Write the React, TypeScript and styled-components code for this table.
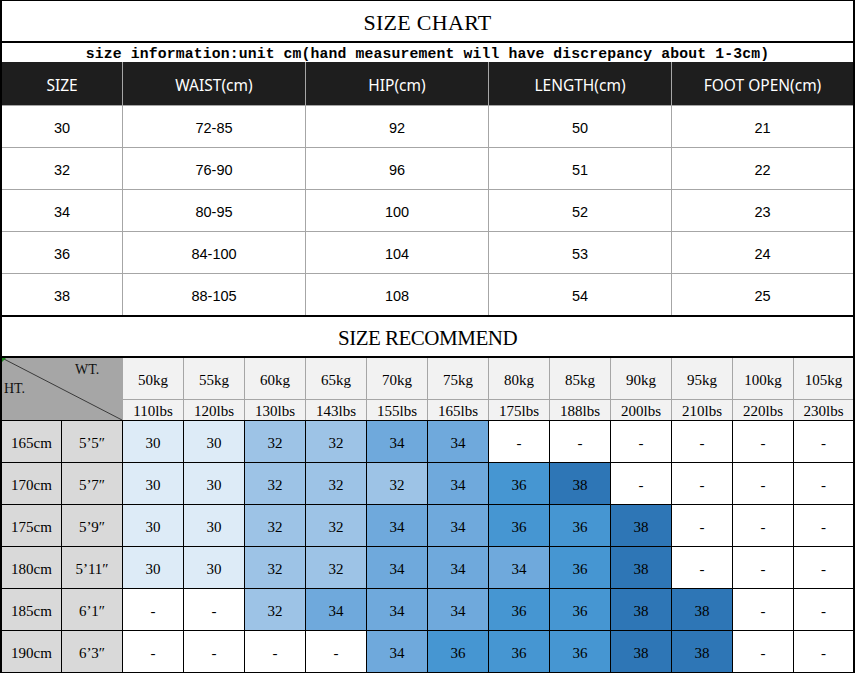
import React from "react";
import styled, { createGlobalStyle } from "styled-components";

const Global = createGlobalStyle`
  html, body { margin: 0; padding: 0; background: #fff; }
  * { box-sizing: border-box; }
`;

const Frame = styled.div`
  width: 855px;
  border-style: solid;
  border-color: #000;
  border-width: 1px 2px;
  background: #fff;
`;

const Heading = styled.div<{ $h: number; $ls: number; $fs: number }>`
  height: ${(p) => p.$h}px;
  padding-top: 4px;
  display: flex;
  align-items: center;
  justify-content: center;
  font-family: "Liberation Serif", serif;
  font-size: ${(p) => p.$fs}px;
  color: #000;
  letter-spacing: ${(p) => p.$ls}px;
`;

const Rule = styled.div`
  height: 2px;
  background: #000;
`;

const Note = styled.div`
  height: 19px;
  padding-top: 3px;
  display: flex;
  align-items: center;
  justify-content: center;
  font-family: "Liberation Mono", monospace;
  font-weight: 700;
  font-size: 14.75px;
  letter-spacing: 0.14px;
  white-space: nowrap;
  color: #000;
`;

const SizeGrid = styled.div`
  display: grid;
  grid-template-columns: 120px 182px 182px 182px 181px;
  grid-template-rows: 43px repeat(5, 41px);
  gap: 1px;
  background: #a6a6a6;
`;

const HeadCell = styled.div`
  background: #1e1e1e;
  color: #fff;
  font-family: "Noto Sans", sans-serif;
  font-size: 15.5px;
  padding-top: 2px;
  display: flex;
  align-items: center;
  justify-content: center;
`;

const BodyCell = styled.div`
  background: #fff;
  color: #000;
  font-family: "Liberation Sans", sans-serif;
  font-size: 14.5px;
  padding-top: 3px;
  display: flex;
  align-items: center;
  justify-content: center;
`;

const COLS = "59px 60px repeat(11, 60px) 59px";

const RecHead = styled.div`
  display: grid;
  grid-template-columns: ${COLS};
  grid-template-rows: 41px 20px;
  gap: 1px;
  background: #a6a6a6;
`;

const Corner = styled.div`
  grid-column: span 2;
  grid-row: span 2;
  background: #a6a6a6;
  position: relative;
  display: flex;
  flex-direction: column;
  font-family: "Liberation Serif", serif;
  font-size: 14px;
  color: #111;
  line-height: 14px;
`;

const Diagonal = styled.svg`
  position: absolute;
  inset: 0;
  width: 100%;
  height: 100%;
`;

const Flag = styled.span`
  position: absolute;
  left: 0;
  top: 0;
  width: 0;
  height: 0;
  border-top: 4px solid #1a8a1a;
  border-right: 4px solid transparent;
`;

const CornerLabel = styled.span<{ $ml: number; $mt: number }>`
  position: relative;
  margin-left: ${(p) => p.$ml}px;
  margin-top: ${(p) => p.$mt}px;
`;

const WeightCell = styled.div`
  background: #f2f2f2;
  color: #000;
  font-family: "Liberation Serif", serif;
  font-size: 15px;
  padding-top: 3px;
  display: flex;
  align-items: center;
  justify-content: center;
  white-space: nowrap;
`;

const RecBody = styled.div`
  display: grid;
  grid-template-columns: ${COLS};
  grid-template-rows: repeat(6, 41px);
  gap: 1px;
  background: #000;
  border-top: 1px solid #000;
`;

const SHADES: Record<string, string> = {
  "30": "#ddebf7",
  "32": "#9dc3e6",
  "34": "#6fa9dc",
  "36": "#4696d2",
  "38": "#2e76b6",
  "-": "#ffffff",
};

const RecCell = styled.div<{ $bg: string }>`
  background: ${(p) => p.$bg};
  color: #000;
  font-family: "Liberation Serif", serif;
  font-size: 15px;
  padding-top: 3px;
  display: flex;
  align-items: center;
  justify-content: center;
  white-space: nowrap;
`;

const headers = ["SIZE", "WAIST(cm)", "HIP(cm)", "LENGTH(cm)", "FOOT OPEN(cm)"];
const sizes = [
  ["30", "72-85", "92", "50", "21"],
  ["32", "76-90", "96", "51", "22"],
  ["34", "80-95", "100", "52", "23"],
  ["36", "84-100", "104", "53", "24"],
  ["38", "88-105", "108", "54", "25"],
];

const kgs = ["50kg", "55kg", "60kg", "65kg", "70kg", "75kg", "80kg", "85kg", "90kg", "95kg", "100kg", "105kg"];
const lbs = ["110lbs", "120lbs", "130lbs", "143lbs", "155lbs", "165lbs", "175lbs", "188lbs", "200lbs", "210lbs", "220lbs", "230lbs"];

const rec: [string, string, string[]][] = [
  ["165cm", "5’5″", ["30", "30", "32", "32", "34", "34", "-", "-", "-", "-", "-", "-"]],
  ["170cm", "5’7″", ["30", "30", "32", "32", "32", "34", "36", "38", "-", "-", "-", "-"]],
  ["175cm", "5’9″", ["30", "30", "32", "32", "34", "34", "36", "36", "38", "-", "-", "-"]],
  ["180cm", "5’11″", ["30", "30", "32", "32", "34", "34", "34", "36", "38", "-", "-", "-"]],
  ["185cm", "6’1″", ["-", "-", "32", "34", "34", "34", "36", "36", "38", "38", "-", "-"]],
  ["190cm", "6’3″", ["-", "-", "-", "-", "34", "36", "36", "36", "38", "38", "-", "-"]],
];

export default function App() {
  return (
    <>
      <Global />
      <Frame>
        <Heading $h={40} $ls={0.3} $fs={22}>SIZE CHART</Heading>
        <Rule />
        <Note>size information:unit cm(hand measurement will have discrepancy about 1-3cm)</Note>
        <SizeGrid>
          {headers.map((h) => (
            <HeadCell key={h}>{h}</HeadCell>
          ))}
          {sizes.map((row, i) =>
            row.map((v, j) => <BodyCell key={`${i}-${j}`}>{v}</BodyCell>)
          )}
        </SizeGrid>
        <Rule />
        <Heading $h={39} $ls={-0.5} $fs={21}>SIZE RECOMMEND</Heading>
        <Rule />
        <RecHead>
          <Corner>
            <Diagonal viewBox="0 0 120 62" preserveAspectRatio="none">
              <line x1="0" y1="0" x2="120" y2="62" stroke="#3a3a3a" strokeWidth="1" />
            </Diagonal>
            <Flag />
            <CornerLabel $ml={73} $mt={5}>WT.</CornerLabel>
            <CornerLabel $ml={2} $mt={5}>HT.</CornerLabel>
          </Corner>
          {kgs.map((k) => (
            <WeightCell key={k}>{k}</WeightCell>
          ))}
          {lbs.map((l) => (
            <WeightCell key={l}>{l}</WeightCell>
          ))}
        </RecHead>
        <RecBody>
          {rec.map(([cm, ft, vals]) => (
            <React.Fragment key={cm}>
              <RecCell $bg="#d9d9d9">{cm}</RecCell>
              <RecCell $bg="#d9d9d9">{ft}</RecCell>
              {vals.map((v, j) => (
                <RecCell key={j} $bg={SHADES[v]}>
                  {v}
                </RecCell>
              ))}
            </React.Fragment>
          ))}
        </RecBody>
      </Frame>
    </>
  );
}
